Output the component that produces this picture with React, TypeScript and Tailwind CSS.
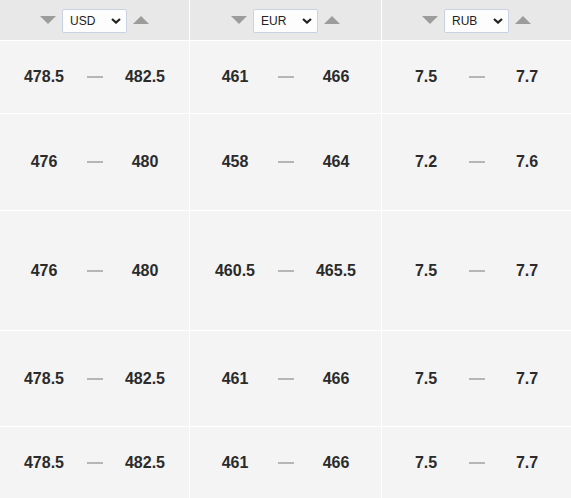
import { useState } from "react"

const currencies = ["USD", "EUR", "RUB"]

const rows = [
  { h: "h-[72px]", values: [["478.5", "482.5"], ["461", "466"], ["7.5", "7.7"]] },
  { h: "h-[96px]", values: [["476", "480"], ["458", "464"], ["7.2", "7.6"]] },
  { h: "h-[119px]", values: [["476", "480"], ["460.5", "465.5"], ["7.5", "7.7"]] },
  { h: "h-[95px]", values: [["478.5", "482.5"], ["461", "466"], ["7.5", "7.7"]] },
  { h: "h-[72px]", values: [["478.5", "482.5"], ["461", "466"], ["7.5", "7.7"]] },
]

function Triangle({ up }: { up?: boolean }) {
  return (
    <svg width="16" height="8" viewBox="0 0 16 8" className="shrink-0">
      <polygon points={up ? "0,8 8,0 16,8" : "0,0 16,0 8,8"} fill="#9c9c9c" />
    </svg>
  )
}

function CurrencySelect({ initial }: { initial: string }) {
  const [value, setValue] = useState(initial)
  return (
    <div className="relative h-6 w-[65px]">
      <select
        value={value}
        onChange={(e) => setValue(e.target.value)}
        className="h-6 w-[65px] appearance-none rounded-[2px] border border-[#c9d1e2] bg-[#fdfdfd] pl-[7px] text-[12px] text-[#222] outline-none"
      >
        {currencies.map((c) => (
          <option key={c} value={c}>
            {c}
          </option>
        ))}
      </select>
      <svg
        width="10"
        height="6"
        viewBox="0 0 10 6"
        className="pointer-events-none absolute left-[49px] top-[10px]"
      >
        <path d="M1 1 L5 4.6 L9 1" fill="none" stroke="#222" strokeWidth="2.2" />
      </svg>
    </div>
  )
}

export default function App() {
  return (
    <div
      className="grid w-[571px] grid-cols-[189px_191px_189px] gap-px bg-white text-[#2b2b2b]"
      style={{ fontFamily: '"Liberation Sans", Arial, sans-serif' }}
    >
      {currencies.map((c) => (
        <div key={c} className="flex h-10 items-center justify-center gap-[6px] bg-[#e8e8e8]">
          <Triangle />
          <CurrencySelect initial={c} />
          <Triangle up />
        </div>
      ))}

      {rows.map((row, i) =>
        row.values.map(([buy, sell], j) => (
          <div key={`${i}-${j}`} className={`flex items-center justify-center bg-[#f4f4f4] ${row.h}`}>
            <span className="w-[70px] text-center text-[16px] font-bold">{buy}</span>
            <span className="flex w-[31px] justify-center">
              <span className="h-[2px] w-4 bg-[#b5b5b5]" />
            </span>
            <span className="w-[70px] text-center text-[16px] font-bold">{sell}</span>
          </div>
        ))
      )}
    </div>
  )
}
